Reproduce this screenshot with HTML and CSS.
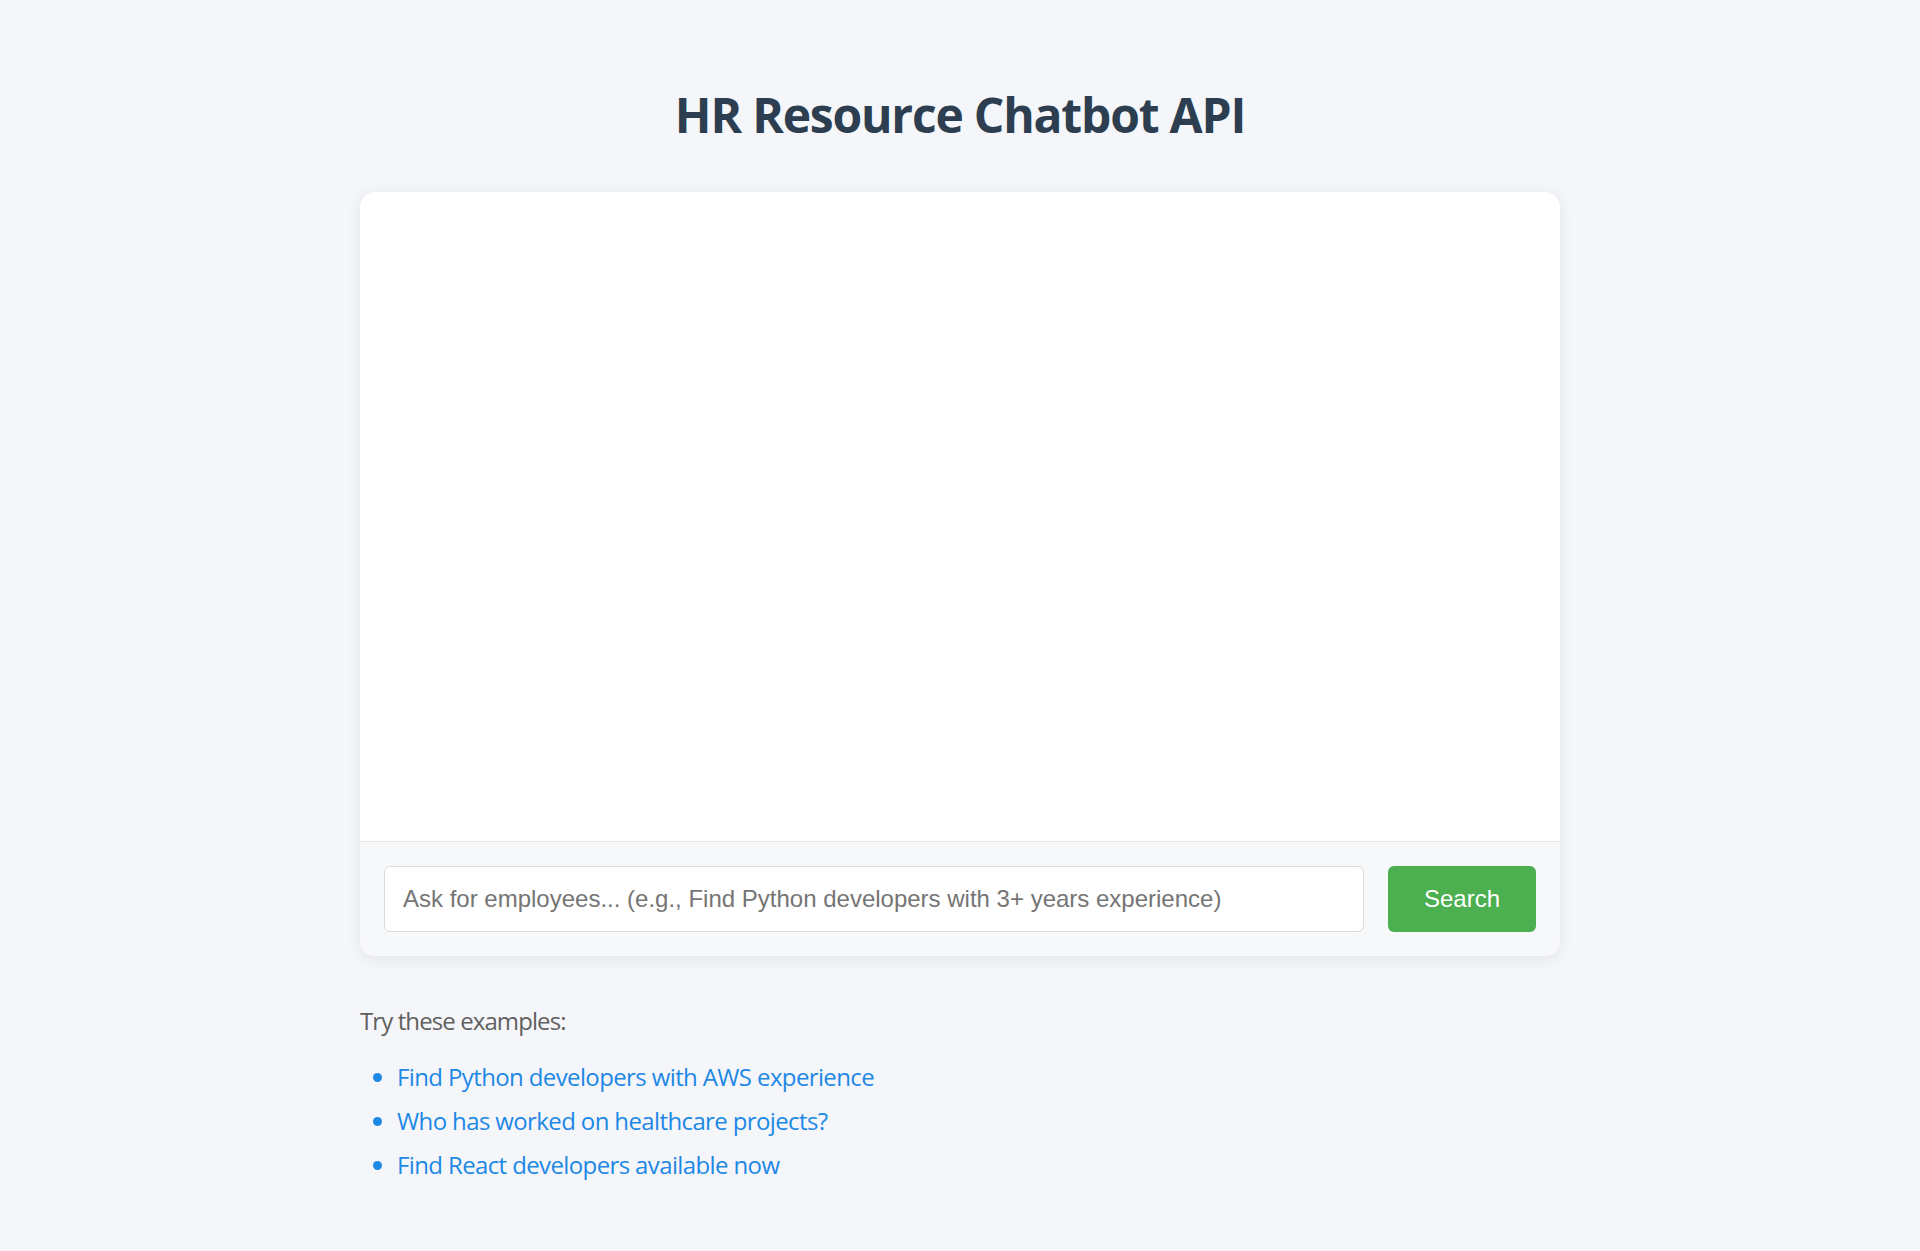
FILE: index.html
```html
<!DOCTYPE html>
<html lang="en">
<head>
<meta charset="utf-8">
<title>HR Resource Chatbot API</title>
<link rel="stylesheet" href="styles.css">
</head>
<body>
<main class="page">
  <h1 class="title">HR Resource Chatbot API</h1>
  <section class="chat-card">
    <div class="messages"></div>
    <form class="input-bar">
      <input class="query-input" type="text" placeholder="Ask for employees... (e.g., Find Python developers with 3+ years experience)">
      <button class="search-btn" type="button">Search</button>
    </form>
  </section>
  <section class="examples">
    <p class="examples-label">Try these examples:</p>
    <ul class="examples-list">
      <li><a href="#">Find Python developers with AWS experience</a></li>
      <li><a href="#">Who has worked on healthcare projects?</a></li>
      <li><a href="#">Find React developers available now</a></li>
    </ul>
  </section>
</main>
</body>
</html>
```

FILE: styles.css
```css
html, body {
  margin: 0;
  padding: 0;
  background: #f5f6fa;
}

body {
  font-family: "Open Sans", "Noto Sans", sans-serif;
  color: #333;
}

.page {
  width: 1200px;
  margin: 0 auto;
  padding-top: 83px;
}

.title {
  margin: 0 0 45px;
  font-size: 48px;
  line-height: 64px;
  font-weight: 700;
  letter-spacing: -1.2px;
  color: #2c3e50;
  text-align: center;
}

.chat-card {
  background: #fff;
  border-radius: 15px;
  box-shadow: 0 3px 15px rgba(0, 0, 0, 0.08);
  overflow: hidden;
}

.messages {
  height: 649px;
}

.input-bar {
  display: flex;
  gap: 24px;
  margin: 0;
  padding: 24px;
  background: #f7f8fa;
  border-top: 1px solid #e8e8e8;
}

.query-input {
  flex: 1;
  height: 66px;
  box-sizing: border-box;
  padding: 0 18px;
  border: 1px solid #dcdcdc;
  border-radius: 6px;
  background: #fff;
  font-family: "Liberation Sans", Arial, sans-serif;
  font-size: 24px;
  color: #333;
  outline: none;
}

.query-input::placeholder {
  color: #757575;
}

.search-btn {
  width: 148px;
  height: 66px;
  border: none;
  border-radius: 6px;
  background: #4caf50;
  color: #fff;
  font-family: "Liberation Sans", Arial, sans-serif;
  font-size: 24px;
  cursor: pointer;
}

.examples {
  margin-top: 47px;
}

.examples-label {
  margin: 0 0 20px;
  font-size: 24px;
  line-height: 36px;
  letter-spacing: -0.9px;
  color: #606060;
}

.examples-list {
  margin: 0;
  padding-left: 37px;
  color: #1e88e5;
}

.examples-list li {
  font-size: 24px;
  line-height: 36px;
  margin-bottom: 8px;
}

.examples-list a {
  color: #1e88e5;
  text-decoration: none;
  letter-spacing: -0.62px;
}
```
